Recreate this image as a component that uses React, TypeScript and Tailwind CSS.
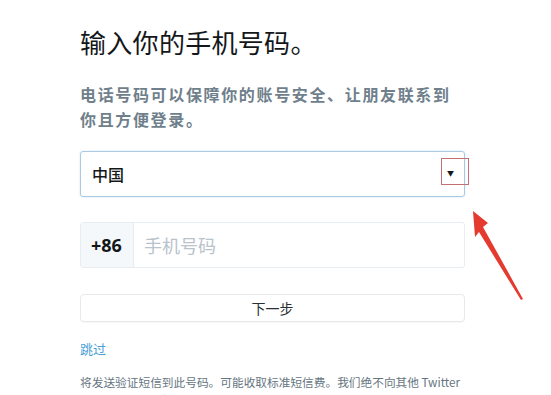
import React from "react";

export default function App() {
  const cjk = { fontFamily: '"Noto Sans CJK SC", "Noto Sans", sans-serif' };
  return (
    <div
      className="relative w-[551px] h-[395px] overflow-hidden bg-white"
      style={cjk}
    >
      <div className="pl-[80px] pt-[25px] w-[465px]">
        <h1 className="text-[26px] leading-[34px] text-[#14171a] font-normal tracking-[0.3px]">
          输入你的手机号码。
        </h1>
        <p className="mt-[23px] text-[16px] leading-[25px] font-bold text-[#6f7f8c] tracking-[1.65px] whitespace-nowrap">
          电话号码可以保障你的账号安全、让朋友联系到
          <br />
          你且方便登录。
        </p>

        <div className="relative mt-[19px] h-[46px] w-[385px] rounded-[3px] border border-[#a9c9e4] flex items-center pl-[11px] shadow-[0_0_2px_rgba(130,180,220,0.4)]">
          <span className="text-[16px] font-medium text-[#14171a]">中国</span>
          <span className="absolute right-[10px] top-[17px] text-[7px] leading-[8px] text-[#14171a]">
            ▼
          </span>
          <div className="absolute left-[360px] top-[6px] w-[28px] h-[27px] border border-[#c27070]" />
        </div>

        <div className="mt-[25px] h-[46px] w-[385px] rounded-[3px] border border-[#e8edf1] flex">
          <div className="w-[53px] h-full bg-[#f5f8fa] border-r border-[#e8edf1] flex items-center pl-[10px]">
            <span
              className="text-[18px] font-bold text-[#14171a]"
              style={{ fontFamily: '"Open Sans", "Noto Sans", sans-serif' }}
            >
              +86
            </span>
          </div>
          <div className="flex items-center pl-[10px] text-[18px] text-[#b8c3cb]">
            手机号码
          </div>
        </div>

        <div className="mt-[26px] h-[28px] w-[385px] rounded-[4px] border border-[#e6eaed] bg-white flex items-center justify-center shadow-[0_1px_1px_rgba(0,0,0,0.03)]">
          <span className="text-[14px] text-[#292f33]">下一步</span>
        </div>

        <div className="mt-[18px] text-[13px] leading-[18px] text-[#4ba0d6]">跳过</div>

        <p className="mt-[15px] text-[11.7px] leading-[18px] text-[#66757f] whitespace-nowrap">
          将发送验证短信到此号码。可能收取标准短信费。我们绝不向其他 Twitter
          <br />
          用户显示你的手机号码。
        </p>
      </div>

      <svg
        className="absolute left-0 top-0"
        width="551"
        height="395"
        viewBox="0 0 551 395"
      >
        <polygon
          points="473,211 488,223 483,227 523,299 521,300 479,232 475,237"
          fill="#e53a30"
        />
      </svg>
    </div>
  );
}
